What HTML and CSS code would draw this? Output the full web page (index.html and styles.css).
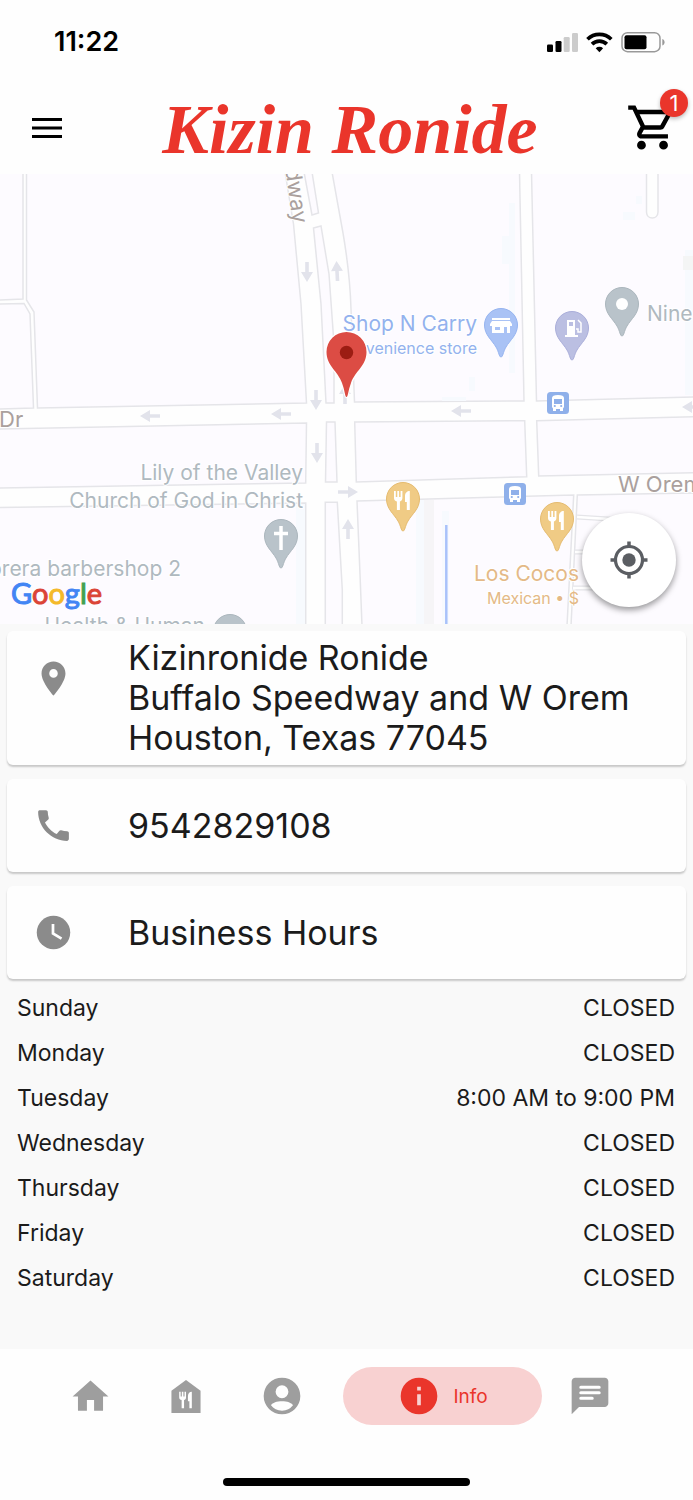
FILE: index.html
```html
<!DOCTYPE html>
<html lang="en">
<head>
<meta charset="utf-8">
<meta name="viewport" content="width=device-width, initial-scale=1">
<title>Kizin Ronide</title>
<link rel="stylesheet" href="styles.css">
</head>
<body>
<div class="app">
  <div class="status">
    <span class="clock">11:22</span>
    <svg class="status-icons" width="118" height="22" viewBox="0 0 118 22" aria-hidden="true">
      <rect x="0" y="13.500" width="6" height="7.500" rx="1.300"/>
      <rect x="8.500" y="10" width="6" height="11" rx="1.300"/>
      <g fill="#ccc"><rect x="16.700" y="6" width="6" height="15" rx="1.300"/><rect x="25" y="2" width="6" height="19" rx="1.300"/></g>
      <g fill="none" stroke="#000" stroke-width="3.700"><path d="M40.500 8.200a17 17 0 0 1 23.800 0"/><path d="M45 13.100a10.500 10.500 0 0 1 14.800 0"/></g>
      <path d="M52.400 21.200l-3.700-3.900a5.500 5.500 0 0 1 7.400 0z"/>
      <rect x="75" y="1.700" width="38" height="19" rx="5.500" fill="none" stroke="#999" stroke-width="1.500"/>
      <rect x="77.500" y="4.300" width="22" height="14" rx="2"/>
      <path d="M115.300 8c3 1 3 5.500 0 6.500z" fill="#999"/>
    </svg>
  </div>
  <header class="header">
    <button class="icon-button" aria-label="Menu">
      <svg width="30" height="22" viewBox="0 0 30 22"><path d="M0 2.500h30M0 11h30M0 19.500h30" stroke="#000" stroke-width="3"/></svg>
    </button>
    <h1 class="brand">Kizin Ronide</h1>
    <button class="icon-button cart" aria-label="Cart, 1 item">
      <svg width="53" height="53" viewBox="0 0 24 24"><path d="M15.550 13c.75 0 1.410-.41 1.750-1.030l3.580-6.490A.996.996 0 0 0 20.010 4H5.210l-.94-2H1v2h2l3.600 7.590-1.350 2.440C4.520 15.370 5.480 17 7 17h12v-2H7l1.100-2h7.450zM6.160 6h12.150l-2.760 5H8.530L6.160 6zM7 18c-1.100 0-1.990.9-1.990 2S5.900 22 7 22s2-.9 2-2-.9-2-2-2zm10 0c-1.100 0-1.990.9-1.990 2s.89 2 1.990 2 2-.9 2-2-.9-2-2-2z"/></svg>
      <span class="badge">1</span>
    </button>
  </header>

  <section class="map" aria-label="Map">
    <svg class="map-art" viewBox="0 0 693 450" preserveAspectRatio="xMidYMid slice">
      <defs>
        <path id="pin" d="M0 32C-2 32-2 27-5 22C-9 15-16.500 10-16.500 0A16.500 16.500 0 0 1 16.500 0C16.500 10 9 15 5 22C2 27 2 32 0 32Z"/>
        <path id="arrow" d="M-10 0L0-6V-1.800H10V1.800H0V6Z"/>
        <g id="food" fill="#fff"><path d="M-9-8h1.800v6h1.500v-6h1.800v6h1.500v-6H-.600v7c0 2-1 3-2.500 3.500V11h-3V2.500C-8 2-9 1-9-1z"/><path d="M6.800-8V11h-3V3H2v-6c0-3 2-5 4.800-5z"/></g>
        <g id="bus"><rect x="-11" y="-11" width="22" height="22" rx="3.500" fill="#8fb0ea"/><path fill="#fff" fill-rule="evenodd" d="M-6-5c0-2 2-3 6-3s6 1 6 3v9L5 5.500V8H2V6h-4v2h-3V5.500L-6 4zM-4-4v5h8v-5zM-4.300 3a1.100 1.100 0 1 0 2.200 0 1.100 1.100 0 1 0-2.200 0M2.100 3a1.100 1.100 0 1 0 2.200 0 1.100 1.100 0 1 0-2.200 0"/></g>
      </defs>
      <rect width="693" height="450" fill="#fefefe"/>
      <g class="blocks">
        <path d="M-2-2H23V125L-2 126Z"/>
        <path d="M-2 130L24 129.500L30 140L33.500 234L-2 235Z"/>
        <path d="M26.500-2V126L34 138L37.500 234L306.500 229L301 130L293.500 50L285-2Z"/>
        <path d="M304-2L312 41L318.500 39L312-2Z"/>
        <path d="M313.500 54L321 52L329 100L334 170V229H326L321 130Z"/>
        <path d="M332-2L343 59Q350 100 351 135L354.500 228L524 227L519.500-2Z"/>
        <path d="M531.500-2L536.500 227L695 223V-2Z"/>
        <path d="M-2 255L306.500 249L305.700 309L-2 314Z"/>
        <path d="M326.500 248H335L337 308H325.500Z"/>
        <path d="M354.700 248L524.700 246.700L526.700 302.700L356.300 308Z"/>
        <path d="M536.700 246.700L695 242.700V298.700L538.700 302Z"/>
        <path d="M-2 333.500L305.700 329V452H-2Z"/>
        <path d="M325.300 328.300H337.300L342.300 416V452H325.300Z"/>
        <path d="M357 327L573.700 321L567 452H362L360 400Z"/>
        <path d="M577.300 321L695 319V452H571Z"/>
      </g>
      <g fill="#f7fafe">
        <rect x="509" y="29" width="6" height="170"/><rect x="502" y="62" width="8" height="28"/><rect x="685" y="76" width="8" height="145"/><rect x="623" y="38" width="12" height="8"/><rect x="636" y="22" width="6" height="8"/><rect x="469" y="203" width="6" height="14"/><rect x="442" y="223" width="24" height="4"/>
        <rect x="296" y="330" width="9" height="120"/><rect x="416" y="326" width="8" height="124"/><rect x="442" y="337" width="7" height="113"/>
      </g>
      <rect x="424" y="326" width="10" height="124" fill="#f6f5f7"/>
      <rect x="683" y="82" width="10" height="14" fill="#f4f5f5"/>
      <path d="M646.500-2V38C646.500 46 658 46 658 38V-2" fill="#fefefe" stroke="#e5e5e9" stroke-width="1.500"/>
      <g fill="none">
        <path d="M577 343L640 347M575 378H640M573 414H640" stroke="#e5e5e9" stroke-width="5"/>
        <path d="M577 343L640 347M575 378H640M573 414H640" stroke="#fff" stroke-width="2.500"/>
      </g>
      <path d="M446.300 351V450" stroke="#a9c2fa" stroke-width="2.500"/>
      <g fill="#e2e3eb">
        <use href="#arrow" x="150" y="242"/><use href="#arrow" x="281" y="240"/><use href="#arrow" x="461" y="237"/><use href="#arrow" x="692" y="233"/>
        <use href="#arrow" transform="translate(348 318) rotate(180)"/>
        <use href="#arrow" transform="translate(307 98) rotate(-90)"/><use href="#arrow" transform="translate(316 226) rotate(-90)"/><use href="#arrow" transform="translate(317 279) rotate(-90)"/>
        <use href="#arrow" transform="translate(337 97) rotate(87)"/><use href="#arrow" transform="translate(348 355) rotate(90)"/><use href="#arrow" transform="translate(345 220) rotate(90)"/>
      </g>
      <g class="place" text-anchor="end">
        <text class="blue" x="477" y="157">Shop N Carry</text>
        <text class="blue minor" x="477" y="180">Convenience store</text>
        <text x="303" y="306">Lily of the Valley</text>
        <text x="303" y="334">Church of God in Christ</text>
        <text x="181" y="402">Cabrera barbershop 2</text>
        <text x="205" y="459">Health &amp; Human</text>
        <text class="gold" x="579" y="407">Los Cocos</text>
        <text class="gold minor" x="579" y="430">Mexican • $</text>
        <text class="street" transform="translate(293 50) rotate(82)">Speedway</text>
      </g>
      <g class="place">
        <text x="647" y="147">Nine</text>
        <text class="street" x="-1" y="253">Dr</text>
        <text class="street" x="618" y="318">W Orem</text>
      </g>
      <g stroke-width="1">
        <g transform="translate(501 151)"><use href="#pin" fill="#a9c2f5" stroke="#96b4f0"/><path fill="#fff" fill-rule="evenodd" d="M-9-7H9V-5H-9zM-9-4H9L11-1V1H9V8H-9V1h-2v-2zM-6 2v3h5V2zM3 2v6h3V2z"/></g>
        <g transform="translate(572 154)"><use href="#pin" fill="#bbbfe2" stroke="#aaaeda"/><path fill="#fff" fill-rule="evenodd" d="M-5-8H3V7H6v2H-7V7h2zM-3-6v4h4v-4z"/><path d="M4 1h2v3h3V-5L6-8" fill="none" stroke="#fff" stroke-width="1.500"/></g>
        <g transform="translate(622 130)"><use href="#pin" fill="#b9c3ca" stroke="#abb6bd"/><circle r="6" fill="#fff"/></g>
        <g transform="translate(281 362)"><use href="#pin" fill="#b9c3ca" stroke="#abb6bd"/><path d="M0-10V14M-7-2.500H7" stroke="#fff" stroke-width="3.500"/></g>
        <g transform="translate(403 325)"><use href="#pin" fill="#f0cb85" stroke="#e5bb70"/><use href="#food"/></g>
        <g transform="translate(557 345)"><use href="#pin" fill="#f0cb85" stroke="#e5bb70"/><use href="#food"/></g>
        <use href="#pin" x="230" y="457" fill="#b9c3ca" stroke="#abb6bd"/>
      </g>
      <use href="#bus" x="558" y="229"/><use href="#bus" x="515" y="320"/>
      <path d="M346.500 223C345 223 345 217 342 209C338 197 326.500 192 326.500 178A20 20 0 0 1 366.500 178C366.500 192 355 197 351 209C348 217 348 223 346.500 223Z" fill="#dc4c44" stroke="#fff" stroke-width="2.500" paint-order="stroke"/>
      <circle cx="346.500" cy="178.500" r="6.700" fill="#9c1d13"/>
      <text class="google" x="11" y="430"><tspan class="g-blue">G</tspan><tspan class="g-red">o</tspan><tspan class="g-yellow">o</tspan><tspan class="g-blue">g</tspan><tspan class="g-green">l</tspan><tspan class="g-red">e</tspan></text>
    </svg>
    <button class="locate" aria-label="My location">
      <svg width="38" height="38" viewBox="0 0 38 38"><circle cx="19" cy="19" r="6.700" fill="#5b5e63"/><circle cx="19" cy="19" r="13.500" fill="none" stroke="#5b5e63" stroke-width="3.200"/><path d="M19 .500V5M19 33V37.500M.500 19H5M33 19H37.500" stroke="#5b5e63" stroke-width="3.500"/></svg>
    </button>
  </section>

  <main class="content">
    <section class="card address">
      <svg class="card-icon" viewBox="0 0 24 24"><path d="M12 2C8.130 2 5 5.130 5 9c0 5.250 7 13 7 13s7-7.750 7-13c0-3.870-3.130-7-7-7zm0 9.500a2.500 2.500 0 0 1 0-5 2.500 2.500 0 0 1 0 5z"/></svg>
      <address class="card-text">Kizinronide Ronide<br>Buffalo Speedway and W Orem<br>Houston, Texas 77045</address>
    </section>
    <section class="card">
      <svg class="card-icon" viewBox="0 0 24 24"><path d="M20.010 15.380c-1.230 0-2.420-.2-3.530-.56a.977.977 0 0 0-1.010.24l-1.570 1.970c-2.830-1.350-5.480-3.900-6.890-6.830l1.950-1.660c.27-.28.35-.67.24-1.020-.37-1.110-.56-2.300-.56-3.530 0-.54-.45-.99-.99-.99H4.190C3.650 3 3 3.240 3 3.990 3 13.280 10.730 21 20.010 21c.71 0 .99-.63.99-1.180v-3.450c0-.54-.45-.99-.99-.99z"/></svg>
      <a class="card-text" href="tel:9542829108">9542829108</a>
    </section>
    <section class="card">
      <svg class="card-icon" viewBox="0 0 24 24"><circle cx="12" cy="12" r="9.800"/><path d="M11.700 7v5.600l5 3" fill="none" stroke="#fff" stroke-width="1.600"/></svg>
      <h2 class="card-text">Business Hours</h2>
    </section>
    <table class="hours">
      <tbody>
        <tr><th scope="row">Sunday</th><td>CLOSED</td></tr>
        <tr><th scope="row">Monday</th><td>CLOSED</td></tr>
        <tr><th scope="row">Tuesday</th><td>8:00 AM to 9:00 PM</td></tr>
        <tr><th scope="row">Wednesday</th><td>CLOSED</td></tr>
        <tr><th scope="row">Thursday</th><td>CLOSED</td></tr>
        <tr><th scope="row">Friday</th><td>CLOSED</td></tr>
        <tr><th scope="row">Saturday</th><td>CLOSED</td></tr>
      </tbody>
    </table>
  </main>

  <footer class="footer">
    <nav class="tabs">
      <button class="tab" aria-label="Home"><svg width="43" height="43" viewBox="0 0 24 24"><path d="M10 20v-6h4v6h5v-8h3L12 3 2 12h3v8z"/></svg></button>
      <button class="tab" aria-label="Menu"><svg width="30" height="33" viewBox="0 0 30 34"><path d="M0 11L15 0L30 11V34H0z"/><path fill="#fff" d="M8 12h1.500v5h1.200v-5h1.600v5h1.200v-5H15v6c0 1.500-.8 2.300-2 2.700V29h-2.500v-8.300C9 20.300 8 19.500 8 18zM21 12v17h-2.500v-7H17v-5c0-3 1.500-5 4-5z"/></svg></button>
      <button class="tab" aria-label="Account"><svg width="44" height="44" viewBox="0 0 24 24"><path fill-rule="evenodd" d="M12 2a10 10 0 1 0 0 20 10 10 0 0 0 0-20zm0 4.200a3.500 3.500 0 1 1 0 7 3.500 3.500 0 0 1 0-7zM12 20c-2.500 0-4.700-1.100-6-2.900.8-1.400 3.200-2.200 6-2.200s5.200.8 6 2.200A7.500 7.500 0 0 1 12 20z"/></svg></button>
      <button class="tab active" aria-current="page"><svg width="44" height="44" viewBox="0 0 24 24"><circle cx="12" cy="12" r="10"/><path d="M11 7h2v2h-2zM11 11h2v6h-2z" fill="#f8d1d1"/></svg><span>Info</span></button>
      <button class="tab" aria-label="Messages"><svg width="44" height="44" viewBox="0 0 24 24"><path d="M20 2H4c-1.100 0-2 .9-2 2v18l4-4h14c1.100 0 2-.9 2-2V4c0-1.100-.9-2-2-2z"/><path d="M7 7.200h10M7 10.200h10M7 13.200h6.200" stroke="#fff" stroke-width="1.700" stroke-linecap="round"/></svg></button>
    </nav>
    <div class="home-bar"></div>
  </footer>
</div>
</body>
</html>
```
FILE: styles.css
```css
* {
  box-sizing: border-box;
}

body {
  margin: 0;
  font-family: Inter, "Liberation Sans", sans-serif;
  background: #fefefe;
  color: #1b1b1b;
}

button {
  border: 0;
  padding: 0;
  background: none;
  font: inherit;
  cursor: pointer;
}

svg {
  display: block;
}

.app {
  display: flex;
  flex-direction: column;
  min-height: 100vh;
}

.status {
  display: flex;
  align-items: center;
  justify-content: space-between;
  height: 83px;
  padding: 0 28px 0 54px;
}

.clock {
  font-size: 27px;
  font-weight: 600;
  color: #000;
}

.header {
  display: flex;
  align-items: center;
  justify-content: space-between;
  height: 91px;
  padding: 0 14px 2px 32px;
}

.brand {
  margin: 0;
  padding: 4px 0 0 12px;
  font-family: "Liberation Serif", serif;
  font-size: 70px;
  font-style: italic;
  font-weight: 700;
  line-height: 80px;
  color: #ea352b;
}

.cart {
  position: relative;
}

.badge {
  position: absolute;
  top: -12px;
  right: -9px;
  width: 28px;
  border-radius: 14px;
  background: #ea352b;
  box-shadow: 0 2px 4px #0004;
  color: #fff;
  font-size: 22px;
  line-height: 28px;
}

.map {
  position: relative;
  height: 450px;
  overflow: hidden;
}

.map-art {
  width: 100%;
  height: 100%;
}

.blocks {
  fill: #fdfbff;
  stroke: #e5e5e9;
  stroke-width: 1.5;
}

.place {
  font-family: Inter, sans-serif;
  font-size: 21px;
  fill: #afb9bf;
  stroke: #fff;
  stroke-width: 2;
  paint-order: stroke;
}

.place .minor {
  font-size: 16px;
}

.place .blue {
  fill: #93b2ee;
}

.place .gold {
  fill: #e4b987;
}

.place .street {
  font-size: 22px;
  fill: #aaa09d;
}

.google {
  font-family: Lato, sans-serif;
  font-size: 29px;
}

.g-blue {
  fill: #4285f4;
  stroke: #4285f4;
}

.g-red {
  fill: #db4437;
  stroke: #db4437;
}

.g-yellow {
  fill: #f4b92a;
  stroke: #f4b92a;
}

.g-green {
  fill: #43a052;
  stroke: #43a052;
}

.locate {
  position: absolute;
  right: 17px;
  bottom: 17px;
  display: grid;
  place-items: center;
  width: 94px;
  height: 94px;
  border-radius: 50%;
  background: #fff;
  box-shadow: 0 3px 6px #0006;
}

.content {
  display: flex;
  flex: 1;
  flex-direction: column;
  gap: 14px;
  padding: 7px 7px 0;
  background: #f9f9f9;
}

.card {
  display: flex;
  align-items: center;
  gap: 54px;
  min-height: 93px;
  padding: 7px 26px;
  border-radius: 6px;
  background: #fefefe;
  box-shadow: 0 2px 2px #0003;
}

.address {
  align-items: flex-start;
}

.address .card-icon {
  margin-top: 20px;
}

.card-icon {
  flex: none;
  width: 41px;
  height: 41px;
  fill: #8b8b8b;
}

.card-text {
  margin: 0;
  color: inherit;
  font-size: 34px;
  font-style: normal;
  font-weight: 400;
  line-height: 40px;
  text-decoration: none;
}

.hours {
  width: 100%;
  margin-top: -7px;
  border-spacing: 0;
  font-size: 23px;
  line-height: 45px;
}

.hours th,
.hours td {
  padding: 0 11px 0 10px;
  font-weight: 400;
  text-align: left;
}

.hours td {
  text-align: right;
}

.footer {
  display: flex;
  flex-direction: column;
  align-items: center;
  justify-content: space-between;
  height: 151px;
  padding: 18px 0 14px;
}

.tabs {
  display: flex;
  justify-content: center;
  width: 100%;
  padding-right: 13px;
}

.tab {
  display: flex;
  align-items: center;
  justify-content: center;
  width: 96px;
  height: 58px;
  fill: #9e9e9e;
}

.active {
  gap: 12px;
  width: 199px;
  margin-left: 13px;
  border-radius: 29px;
  background: #f8d1d1;
  color: #ea352b;
  fill: #ea352b;
  font-size: 19px;
}

.home-bar {
  width: 247px;
  height: 8px;
  border-radius: 4px;
  background: #000;
}
```
